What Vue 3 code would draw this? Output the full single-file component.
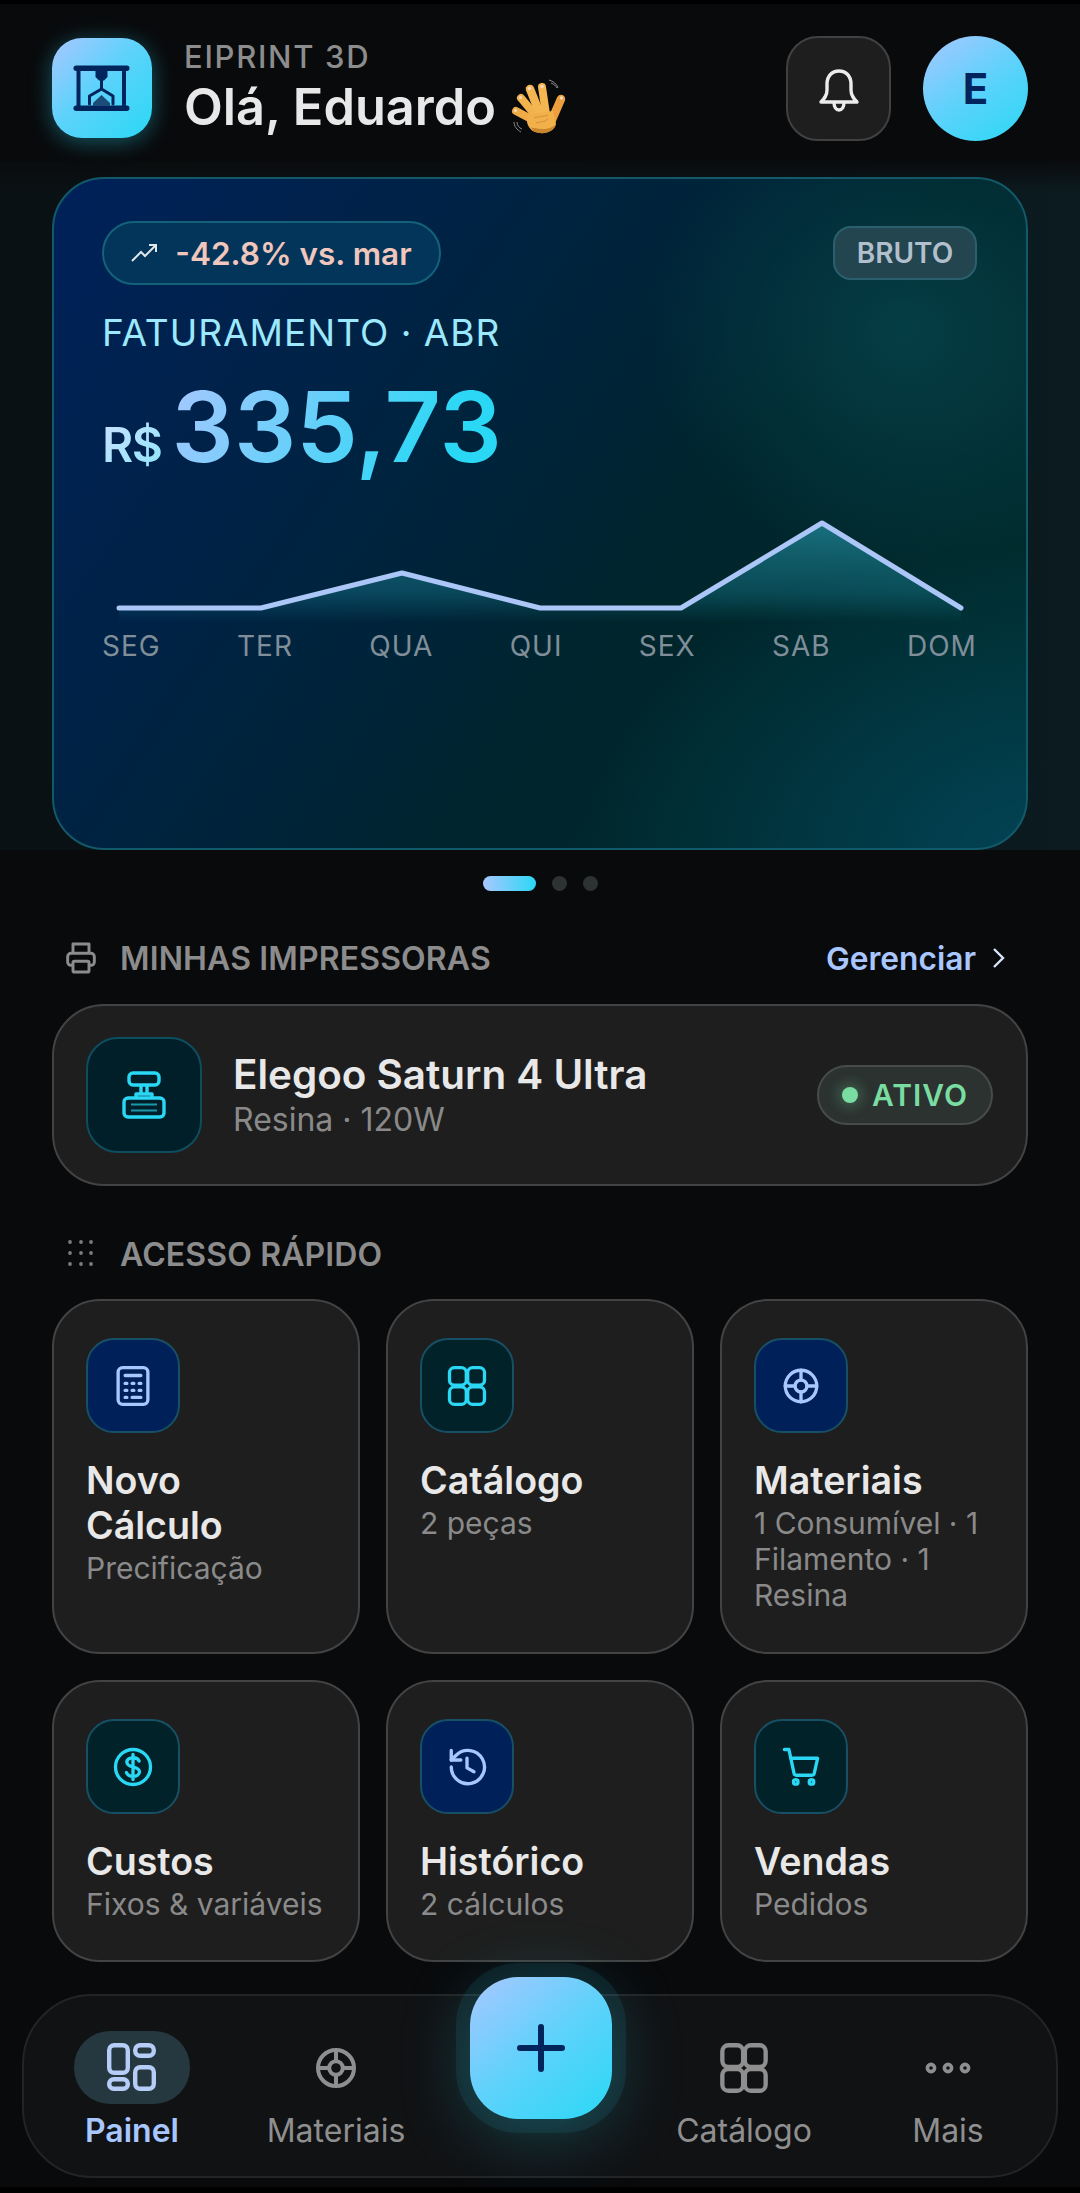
<script setup>
const days = ['SEG', 'TER', 'QUA', 'QUI', 'SEX', 'SAB', 'DOM'];

const icons = {
  calc: '<rect x="3.5" y="1.5" width="17" height="21" rx="2.6"/><path d="M7.5 6h9M7.5 10.5h1M11.5 10.5h1M15.5 10.5h1M7.5 14.5h1M11.5 14.5h1M15.5 14.5h1M7.5 18.5h1M11.5 18.5h5"/>',
  grid: '<rect x="2" y="1.5" width="9.6" height="10" rx="2.8"/><rect x="12.4" y="1.5" width="9.6" height="10" rx="2.8"/><rect x="2" y="12.5" width="9.6" height="10" rx="2.8"/><rect x="12.4" y="12.5" width="9.6" height="10" rx="2.8"/>',
  target: '<circle cx="12" cy="12" r="9"/><circle cx="12" cy="12" r="3.4"/><path d="M12 3v5.6M12 15.4V21M3 12h5.6M15.4 12H21"/>',
  dollar: '<circle cx="12" cy="12" r="10"/><path d="M15.5 8.6c-.5-1.2-1.8-1.9-3.5-1.9-2 0-3.5 1-3.5 2.6 0 3.6 7.2 1.8 7.2 5.4 0 1.6-1.6 2.6-3.7 2.6-1.8 0-3.2-.8-3.7-2.1M12 4.8v14.4"/>',
  history: '<path d="M3 12a9.5 9.5 0 1 0 2.8-6.7L3 8"/><path d="M3 2.5V8h5.5"/><path d="M12 7v5.5l4 2.2"/>',
  cart: '<circle cx="9" cy="20.5" r="1.3"/><circle cx="18" cy="20.5" r="1.3"/><path d="M2.5 2h2.6L8 15.5c.1.7.7 1.2 1.4 1.2h8.8c.7 0 1.3-.5 1.4-1.2L21.5 7H6"/>'
};

const tiles = [
  { title: 'Novo Cálculo', sub: 'Precificação', icon: 'calc', tone: 'blue' },
  { title: 'Catálogo', sub: '2 peças', icon: 'grid', tone: 'teal' },
  { title: 'Materiais', sub: '1 Consumível · 1 Filamento · 1 Resina', icon: 'target', tone: 'blue' },
  { title: 'Custos', sub: 'Fixos & variáveis', icon: 'dollar', tone: 'teal' },
  { title: 'Histórico', sub: '2 cálculos', icon: 'history', tone: 'blue' },
  { title: 'Vendas', sub: 'Pedidos', icon: 'cart', tone: 'teal' }
];
</script>

<template>
  <main class="app">
    <header class="top">
      <div class="logo">
        <svg width="60" height="50" viewBox="0 0 60 50" fill="#00245c">
          <rect x="1.5" y="2.5" width="56" height="5.5" rx="2.7" />
          <rect x="1.5" y="42.5" width="56" height="5.5" rx="2.7" />
          <rect x="4.5" y="6" width="4" height="38" />
          <rect x="50" y="6" width="4" height="38" />
          <path d="M23.5 7h12v7l-3.5 3.5h-5L23.5 14z" />
          <rect x="28" y="17" width="3" height="9" />
          <path d="M17.5 41v-8l12-7 11.5 7v8" fill="none" stroke="#00245c" stroke-width="3" stroke-linejoin="round" stroke-linecap="round" />
          <path d="M29.5 32l8.5 8v3H21v-3z" fill="#1b4d78" />
        </svg>
      </div>
      <div class="hello">
        <div class="brand">EIPRINT 3D</div>
        <div class="name">
          Olá, Eduardo
          <svg class="wave" width="80" height="75" viewBox="0 0 80 75">
            <g fill="none" stroke-linecap="round">
              <path d="M34 51L15 41" stroke="#eeab46" stroke-width="8" />
              <path d="M35 46L20 28" stroke="#f2b24c" stroke-width="8" />
              <path d="M39 44L29 19" stroke="#f4b650" stroke-width="8.5" />
              <path d="M45 44L41 17" stroke="#f4b650" stroke-width="8" />
              <path d="M50 52L60 29" stroke="#ee9f3d" stroke-width="8.5" />
            </g>
            <path d="M28 44L52 41L55 54C53 62 43 65 34 62C28 60 23 51 28 44z" fill="#f2b04a" />
            <path d="M34 62C43 65 53 62 55 54C51 59 42 60 34 58C32 58 31 58 30 57C31 59 32 61 34 62z" fill="#c9862f" />
            <path d="M33 48C38 46 43 47 47 45M35 53C39 52 44 52 47 49" fill="none" stroke="#cf8f36" stroke-width="0.9" />
            <g fill="#f6d9c0">
              <circle cx="14.5" cy="40.5" r="1.6" />
              <circle cx="19.5" cy="27.5" r="1.6" />
              <circle cx="28.5" cy="18.5" r="1.7" />
              <circle cx="41" cy="16.5" r="1.7" />
              <circle cx="60.5" cy="28" r="1.7" />
            </g>
            <path d="M48 10c4 1 8 4 9 8M50 13c3 1 5 3 6 5M13 52c0 4 3 8 7 10M16 52c0 3 2 6 5 7" fill="none" stroke="#8a8a8a" stroke-width="1" />
          </svg>
        </div>
      </div>
      <button class="bell">
        <svg width="42" height="44" viewBox="0 0 42 44" fill="none" stroke="#ececec" stroke-width="3.4" stroke-linejoin="round">
          <path d="M3 33c3-3 6-6 6-12v-6C9 7 14 2 21 2s12 5 12 13v6c0 6 3 9 6 12z" />
          <path d="M16 33c0 5 2 8 5 8s5-3 5-8" />
        </svg>
      </button>
      <div class="avatar">E</div>
    </header>

    <section class="hero-wrap">
      <div class="hero">
        <div class="hero-top">
          <div class="trend">
            <svg width="28" height="20" viewBox="0 0 28 20" fill="none" stroke="#e0e6ea" stroke-width="2">
              <path d="M1 18l9-9 4 4 11-11" />
              <path d="M18 2h7v7" />
            </svg>
            <span>-42.8% vs. mar</span>
          </div>
          <div class="bruto">BRUTO</div>
        </div>
        <div class="label">FATURAMENTO · ABR</div>
        <div class="value">
          <span class="cur">R$</span>
          <span class="num">335,73</span>
        </div>
        <svg class="chart" width="876" height="118" viewBox="0 0 876 118">
          <defs>
            <linearGradient id="fade" x1="0" y1="0" x2="0" y2="1">
              <stop offset="0" stop-color="#2a9fb5" stop-opacity="0.6" />
              <stop offset="0.7" stop-color="#1a8a9e" stop-opacity="0.35" />
              <stop offset="1" stop-color="#1a8a9e" stop-opacity="0" />
            </linearGradient>
          </defs>
          <path d="M16 100H158L299 65 437 100H578L719 15 858 100V114H16z" fill="url(#fade)" />
          <path d="M16 100H158L299 65 437 100H578L719 15 858 100" fill="none" stroke="#abc6f7" stroke-width="5" stroke-linecap="round" stroke-linejoin="round" />
        </svg>
        <div class="days">
          <span v-for="d in days" :key="d">{{ d }}</span>
        </div>
      </div>
    </section>

    <div class="dots">
      <span class="dot active"></span>
      <span class="dot"></span>
      <span class="dot"></span>
    </div>

    <div class="sec-head">
      <svg width="32" height="34" viewBox="0 0 24 25" fill="none" stroke="#8c8c8c" stroke-width="2.2" stroke-linejoin="round">
        <path d="M6 9V2h12v7" />
        <path d="M6 18H4.5A2.5 2.5 0 0 1 2 15.5v-4A2.5 2.5 0 0 1 4.5 9h15a2.5 2.5 0 0 1 2.5 2.5v4a2.5 2.5 0 0 1-2.5 2.5H18" />
        <rect x="6" y="15" width="12" height="8" rx="1" />
      </svg>
      <span class="sec-title">MINHAS IMPRESSORAS</span>
      <span class="manage">Gerenciar</span>
      <svg class="chev" width="14" height="22" viewBox="0 0 14 22" fill="none" stroke="#d8e4fb" stroke-width="2.4">
        <path d="M2 2l9 9-9 9" />
      </svg>
    </div>

    <div class="printer">
      <div class="printer-icon">
        <svg width="44" height="48" viewBox="0 0 44 48" fill="none" stroke="#2ad8f5" stroke-width="3.4" stroke-linejoin="round">
          <rect x="7" y="2" width="30" height="12" rx="4" />
          <path d="M19 14v8M25 14v8" />
          <path d="M14 27v-4h16v4" />
          <rect x="2" y="27" width="40" height="19" rx="4" />
          <path d="M9 33.5h26M9 39.5h26" stroke-width="2" opacity="0.65" />
        </svg>
      </div>
      <div class="printer-text">
        <div class="printer-name">Elegoo Saturn 4 Ultra</div>
        <div class="printer-sub">Resina · 120W</div>
      </div>
      <div class="status">
        <span class="led"></span>
        <span>ATIVO</span>
      </div>
    </div>

    <div class="sec-head second">
      <svg width="32" height="32" viewBox="0 0 32 32" fill="#7d7d7d">
        <template v-for="y in [4, 15, 26]" :key="y">
          <circle v-for="x in [5, 16, 26]" :key="x" :cx="x" :cy="y" r="1.9" />
        </template>
      </svg>
      <span class="sec-title">ACESSO RÁPIDO</span>
    </div>

    <div class="tiles">
      <div v-for="t in tiles" :key="t.title" class="tile">
        <div class="tile-icon" :class="t.tone">
          <svg width="42" height="42" viewBox="0 0 24 24" fill="none" stroke="currentColor" stroke-width="1.9" stroke-linecap="round" stroke-linejoin="round" v-html="icons[t.icon]"></svg>
        </div>
        <div class="tile-title">{{ t.title }}</div>
        <div class="tile-sub">{{ t.sub }}</div>
      </div>
    </div>

    <nav class="nav">
      <div class="nav-item on">
        <div class="nav-icon pill">
          <svg width="50" height="50" viewBox="0 0 50 50" fill="none" stroke="#b6cdf8" stroke-width="4.4">
            <rect x="2.2" y="2.2" width="18.6" height="27.6" rx="5" />
            <rect x="28.2" y="2.2" width="18.6" height="10.6" rx="5" />
            <rect x="2.2" y="36.2" width="18.6" height="9.6" rx="4.5" />
            <rect x="28.2" y="24.2" width="18.6" height="21.6" rx="5" />
          </svg>
        </div>
        <span>Painel</span>
      </div>
      <div class="nav-item">
        <div class="nav-icon">
          <svg width="48" height="48" viewBox="0 0 24 24" fill="none" stroke="#8f8f8f" stroke-width="2" v-html="icons.target"></svg>
        </div>
        <span>Materiais</span>
      </div>
      <div class="nav-item spacer"></div>
      <div class="nav-item">
        <div class="nav-icon">
          <svg width="52" height="52" viewBox="0 0 24 24" fill="none" stroke="#8f8f8f" stroke-width="2" v-html="icons.grid"></svg>
        </div>
        <span>Catálogo</span>
      </div>
      <div class="nav-item">
        <div class="nav-icon">
          <svg width="48" height="14" viewBox="0 0 48 14" fill="none" stroke="#8f8f8f" stroke-width="3.6">
            <circle cx="7" cy="7" r="3.6" />
            <circle cx="24" cy="7" r="3.6" />
            <circle cx="41" cy="7" r="3.6" />
          </svg>
        </div>
        <span>Mais</span>
      </div>
      <button class="fab">
        <svg width="48" height="48" viewBox="0 0 48 48" stroke="#00245c" stroke-width="6" stroke-linecap="round">
          <path d="M24 3v42M3 24h42" />
        </svg>
      </button>
    </nav>
  </main>
</template>

<style>
html, body {
  margin: 0;
  background: #000;
}
</style>

<style scoped>
.app {
  position: relative;
  width: 1080px;
  height: 2193px;
  overflow: hidden;
  box-sizing: border-box;
  background: #090a0c;
  border-top: 4px solid #000;
  border-bottom: 6px solid #000;
  font-family: Inter, "Liberation Sans", sans-serif;
  color: #e8e8e8;
}

.top {
  display: flex;
  align-items: center;
  height: 158px;
  padding: 10px 52px 0;
  box-sizing: border-box;
}

.logo {
  width: 100px;
  height: 100px;
  border-radius: 30px;
  background: linear-gradient(135deg, #a9c7ff, #5ed2fb 45%, #2ad8f5);
  box-shadow: 0 4px 22px rgba(42, 216, 245, 0.38);
  display: flex;
  align-items: center;
  justify-content: center;
}

.hello {
  flex: 1;
  margin-left: 32px;
}

.brand {
  font-size: 31px;
  line-height: 38px;
  letter-spacing: 1.7px;
  font-weight: 500;
  color: #8d8d8d;
}

.name {
  display: flex;
  align-items: center;
  gap: 5px;
  font-size: 50.5px;
  line-height: 62px;
  font-weight: 600;
}

.wave {
  margin: -10px 0;
}

.bell {
  width: 105px;
  height: 105px;
  box-sizing: border-box;
  padding: 5px 0 0;
  border-radius: 32px;
  border: 2px solid #414141;
  background: #1e1e1e;
  display: flex;
  align-items: center;
  justify-content: center;
}

.avatar {
  width: 105px;
  height: 105px;
  margin-left: 32px;
  border-radius: 50%;
  background: linear-gradient(145deg, #a9c7ff, #5ed2fb 50%, #2ad8f5);
  color: #00245c;
  font-size: 42px;
  font-weight: 700;
  display: flex;
  align-items: center;
  justify-content: center;
}

.hero-wrap {
  height: 688px;
  padding: 15px 52px 0;
  box-sizing: border-box;
  overflow: hidden;
  background: linear-gradient(180deg, #0a0c0e, rgba(10, 12, 14, 0) 30px), linear-gradient(90deg, #0a1114, #0b1416 50%, #0b1b20);
}

.hero {
  height: 673px;
  box-sizing: border-box;
  padding: 42px 49px 0 48px;
  border: 2px solid #12596a;
  border-radius: 52px;
  background:
    radial-gradient(ellipse 260px 240px at 850px 150px, rgba(12, 90, 100, 0.45), transparent),
    radial-gradient(ellipse 440px 300px at 100% 100%, rgba(2, 72, 96, 0.75), transparent),
    linear-gradient(125deg, #00215a, #00233f 38%, #00252c 62%, #01302f);
}

.hero-top {
  display: flex;
  align-items: center;
  justify-content: space-between;
}

.trend {
  height: 64px;
  width: 339px;
  box-sizing: border-box;
  border: 2px solid #146279;
  border-radius: 32px;
  background: #03355a;
  display: flex;
  align-items: center;
  justify-content: center;
  gap: 16px;
  color: #f1c6bc;
  font-size: 31.5px;
  font-weight: 600;
}

.bruto {
  width: 144px;
  height: 54px;
  box-sizing: border-box;
  border: 2px solid #2a5f6d;
  border-radius: 18px;
  background: #23454f;
  color: #b2bfcd;
  font-size: 28px;
  font-weight: 600;
  display: flex;
  align-items: center;
  justify-content: center;
}

.label {
  margin-top: 25px;
  font-size: 37px;
  line-height: 46px;
  letter-spacing: 1px;
  color: #9ce9fd;
}

.value {
  display: flex;
  align-items: baseline;
  gap: 10px;
  margin-top: 17px;
  height: 108px;
}

.cur {
  font-size: 48px;
  font-weight: 600;
  letter-spacing: -1.5px;
  background: linear-gradient(135deg, #cde0ff, #8ce6fb);
  -webkit-background-clip: text;
  background-clip: text;
  color: transparent;
}

.num {
  font-size: 98px;
  line-height: 108px;
  font-weight: 600;
  background: linear-gradient(120deg, #a9c7ff, #2ad8f5 80%);
  -webkit-background-clip: text;
  background-clip: text;
  color: transparent;
}

.chart {
  display: block;
  margin: 27px 0 0 1px;
}

.days {
  display: flex;
  justify-content: space-between;
  margin-top: 3px;
  font-size: 28px;
  line-height: 34px;
  letter-spacing: 1px;
  color: #7f8e98;
}

.dots {
  display: flex;
  justify-content: center;
  gap: 16px;
  padding-top: 26px;
}

.dot {
  width: 15px;
  height: 15px;
  border-radius: 50%;
  background: #2d3331;
}

.dot.active {
  width: 53px;
  border-radius: 8px;
  background: linear-gradient(90deg, #a9c7ff, #2ad8f5);
}

.sec-head {
  display: flex;
  align-items: center;
  height: 44px;
  margin-top: 45px;
  padding: 0 52px 0 65px;
}

.sec-head.second {
  margin-top: 46px;
}

.sec-title {
  flex: 1;
  margin-left: 23px;
  font-size: 32px;
  font-weight: 600;
  letter-spacing: 0.13px;
  color: #8c8c8c;
}

.manage {
  margin-right: 16px;
  font-size: 31.7px;
  font-weight: 600;
  color: #a9c7ff;
}

.chev {
  margin-right: 22px;
}

.printer {
  display: flex;
  align-items: center;
  height: 182px;
  box-sizing: border-box;
  margin: 24px 52px 0;
  padding: 0 33px 0 32px;
  border: 2px solid #434343;
  border-radius: 52px;
  background: #1e1e1e;
}

.printer-icon {
  width: 116px;
  height: 116px;
  box-sizing: border-box;
  border: 2px solid #0e4d5e;
  border-radius: 32px;
  background: #001f28;
  display: flex;
  align-items: center;
  justify-content: center;
}

.printer-text {
  flex: 1;
  margin-left: 31px;
}

.printer-name {
  font-size: 40.4px;
  line-height: 50px;
  font-weight: 600;
}

.printer-sub {
  font-size: 32px;
  line-height: 40px;
  color: #8a8a8a;
}

.status {
  width: 176px;
  height: 60px;
  box-sizing: border-box;
  border: 2px solid #454c4a;
  border-radius: 30px;
  background: #2b3230;
  display: flex;
  align-items: center;
  justify-content: center;
  gap: 14px;
  color: #79dca0;
  font-size: 30px;
  font-weight: 600;
  letter-spacing: 1px;
}

.led {
  width: 16px;
  height: 16px;
  border-radius: 50%;
  background: #79dca0;
  box-shadow: 0 0 12px 5px rgba(121, 220, 160, 0.22);
}

.tiles {
  display: grid;
  grid-template-columns: repeat(3, 1fr);
  grid-template-rows: 355px 282px;
  gap: 26px;
  margin: 23px 52px 0;
}

.tile {
  box-sizing: border-box;
  padding: 37px 16px 0 32px;
  border: 2px solid #434343;
  border-radius: 48px;
  background: #1e1e1e;
}

.tile-icon {
  width: 94px;
  height: 95px;
  box-sizing: border-box;
  border: 2px solid #174f64;
  border-radius: 28px;
  display: flex;
  align-items: center;
  justify-content: center;
}

.tile-icon.blue {
  background: #00205a;
  color: #a9c7ff;
}

.tile-icon.teal {
  background: #002228;
  color: #2ad8f5;
}

.tile-title {
  margin-top: 25px;
  width: 220px;
  font-size: 37.6px;
  line-height: 45px;
  font-weight: 600;
}

.tile-sub {
  margin-top: 2px;
  font-size: 30px;
  line-height: 36px;
  color: #8a8a8a;
}

.nav {
  position: relative;
  display: flex;
  height: 184px;
  box-sizing: border-box;
  margin: 32px 22px 0;
  padding: 0 6px;
  border: 2px solid #232425;
  border-radius: 70px;
  background: #111214;
}

.nav-item {
  width: 204px;
  display: flex;
  flex-direction: column;
  align-items: center;
  color: #8f8f8f;
  font-size: 32px;
  line-height: 40px;
}

.nav-item.on {
  color: #a9c7ff;
  font-weight: 600;
}

.nav-icon {
  width: 116px;
  height: 73px;
  margin-top: 35px;
  margin-bottom: 7px;
  border-radius: 36px;
  display: flex;
  align-items: center;
  justify-content: center;
}

.nav-icon.pill {
  background: #25383f;
}

.fab {
  position: absolute;
  left: 446px;
  top: -19px;
  width: 142px;
  height: 142px;
  padding: 0;
  border: none;
  border-radius: 48px;
  background: linear-gradient(140deg, #a9c7ff, #5ed2fb 50%, #2ad8f5);
  box-shadow: 0 0 0 14px rgba(42, 216, 245, 0.09), 0 14px 70px rgba(42, 216, 245, 0.26);
  display: flex;
  align-items: center;
  justify-content: center;
}
</style>
